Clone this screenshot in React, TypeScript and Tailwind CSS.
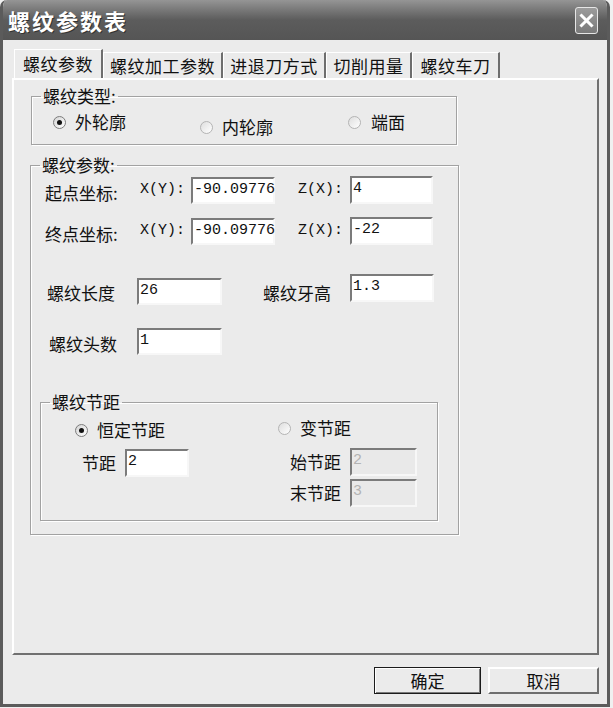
import React from "react";

// 螺纹参数表 dialog (grayscale XP style)

function Radio({ checked }: { checked?: boolean }) {
  return (
    <span
      className={`flex h-[13px] w-[13px] shrink-0 items-center justify-center rounded-full border ${
        checked ? "border-[#7c7c7c] bg-linear-to-br from-[#d4d4d4] to-white" : "border-[#b4b4b4] bg-linear-to-br from-[#dedede] to-white"
      }`}
    >
      {checked && <span className="h-[5px] w-[5px] rounded-full bg-[#111]" />}
    </span>
  );
}

function Field({ value, size, disabled }: { value: string; size: string; disabled?: boolean }) {
  return (
    <div
      className={`${size} shrink-0 border-2 border-t-[#7b7b7b] border-l-[#7b7b7b] border-b-[#f7f7f7] border-r-[#f7f7f7] pl-[1px] pt-[2px] font-['Liberation_Mono',monospace] text-[15px] leading-[17px] ${
        disabled ? "bg-[#e9e9e9] text-[#b3b3b3]" : "bg-white text-[#111]"
      }`}
    >
      {value}
    </div>
  );
}

function Legend({ children }: { children: React.ReactNode }) {
  return <legend className="ml-[9px] px-[2px] text-[17px] leading-[20px]">{children}</legend>;
}

const fieldset = "border border-[#a2a2a2] shadow-[inset_1px_1px_0_#ffffff,1px_1px_0_#ffffff]";

const tabs = [
  { label: "螺纹加工参数", w: "w-[120px]" },
  { label: "进退刀方式", w: "w-[103px]" },
  { label: "切削用量", w: "w-[86px]" },
  { label: "螺纹车刀", w: "w-[88px]" },
];

export default function App() {
  return (
    <div className="h-[708px] w-[613px] bg-[#f0f0f0] font-['Noto_Sans_CJK_SC','Noto_Sans',sans-serif] text-[#111]">
      <div className="flex h-[707px] w-[610px] flex-col overflow-hidden rounded-t-[7px] border-x-[3px] border-b-[3px] border-[#5b5b5b] bg-[#ebebeb]">
        {/* title bar */}
        <div className="flex h-[40px] shrink-0 items-center justify-between bg-linear-to-b from-[#959595] via-[#5c5c5c] to-[#555555] pl-[5px] pr-[9px]">
          <span className="text-[22px] font-bold leading-[26px] tracking-[2px] text-white [text-shadow:1px_1px_0_#333]">
            螺纹参数表
          </span>
          <span className="flex h-[27px] w-[23px] items-center justify-center rounded-[3px] border border-[#e6e6e6] bg-linear-to-b from-[#9c9c9c] to-[#7a7a7a]">
            <svg width="15" height="15" viewBox="0 0 15 15">
              <path d="M2.5 2.5 L12.5 12.5 M12.5 2.5 L2.5 12.5" stroke="#ffffff" strokeWidth="3" strokeLinecap="square" />
            </svg>
          </span>
        </div>

        <div className="flex flex-1 flex-col pl-[9px] pr-[8px] pt-[8px]">
          {/* tabs */}
          <div className="flex h-[30px] items-end pl-[2px] text-[17px] tracking-[0.5px]">
            <div className="flex h-[29px] w-[89px] items-center border-l border-t border-white border-r-2 border-r-[#6e6e6e] pl-[8px] leading-[20px]">
              螺纹参数
            </div>
            {tabs.map((t) => (
              <div
                key={t.label}
                className={`${t.w} flex h-[26px] items-center justify-center border-l border-t border-white border-r-2 border-r-[#6e6e6e] leading-[20px]`}
              >
                {t.label}
              </div>
            ))}
          </div>

          {/* tab panel */}
          <div className="h-[577px] border-2 border-t-white border-l-white border-b-[#707070] border-r-[#707070] text-[17px]">
            <fieldset className={`${fieldset} ml-[17px] mt-[6px] w-[426px] pb-[7px] pt-[6px]`}>
              <Legend>螺纹类型:</Legend>
              <div className="flex items-start pl-[21px] leading-[20px]">
                <div className="flex h-[20px] w-[147px] items-center gap-[9px]">
                  <Radio checked />
                  外轮廓
                </div>
                <div className="mt-[5px] flex h-[20px] w-[148px] items-center gap-[9px]">
                  <Radio />
                  内轮廓
                </div>
                <div className="flex h-[20px] items-center gap-[10px]">
                  <Radio />
                  端面
                </div>
              </div>
            </fieldset>

            <fieldset className={`${fieldset} ml-[16px] mt-[10px] w-[429px] pb-[13px]`}>
              <Legend>螺纹参数:</Legend>

              <div className="mt-[1px] flex h-[28px] items-center pl-[14px]">
                <span className="mt-[5px] w-[95px] leading-[20px]">起点坐标:</span>
                <span className="w-[51px] font-['Liberation_Mono',monospace] text-[15px]">X(Y):</span>
                <Field value="-90.09776" size="w-[84px] h-[27px]" />
                <span className="ml-[23px] w-[52px] font-['Liberation_Mono',monospace] text-[15px]">Z(X):</span>
                <Field value="4" size="w-[83px] h-[28px]" />
              </div>

              <div className="mt-[13px] flex h-[28px] items-center pl-[14px]">
                <span className="mt-[5px] w-[95px] leading-[20px]">终点坐标:</span>
                <span className="w-[51px] font-['Liberation_Mono',monospace] text-[15px]">X(Y):</span>
                <Field value="-90.09776" size="w-[84px] h-[27px]" />
                <span className="ml-[23px] w-[52px] font-['Liberation_Mono',monospace] text-[15px]">Z(X):</span>
                <Field value="-22" size="w-[83px] h-[28px]" />
              </div>

              <div className="mt-[29px] flex items-start pl-[16px]">
                <div className="mt-[4px] flex h-[27px] items-center">
                  <span className="mt-[3px] w-[90px] leading-[20px]">螺纹长度</span>
                  <Field value="26" size="w-[85px] h-[27px]" />
                </div>
                <div className="ml-[41px] flex h-[28px] items-center">
                  <span className="mt-[9px] w-[87px] leading-[20px]">螺纹牙高</span>
                  <Field value="1.3" size="w-[84px] h-[28px]" />
                </div>
              </div>

              <div className="mt-[23px] flex h-[27px] items-center pl-[18px]">
                <span className="mt-[5px] w-[88px] leading-[20px]">螺纹头数</span>
                <Field value="1" size="w-[85px] h-[27px]" />
              </div>

              <fieldset className={`${fieldset} ml-[9px] mt-[37px] w-[398px] pb-[13px]`}>
                <Legend>螺纹节距</Legend>
                <div className="flex leading-[20px]">
                  <div className="w-[237px] pl-[34px] pt-[8px]">
                    <div className="flex h-[20px] items-center gap-[9px]">
                      <Radio checked />
                      恒定节距
                    </div>
                    <div className="ml-[7px] mt-[9px] flex h-[28px] items-center">
                      <span className="w-[43px]">节距</span>
                      <Field value="2" size="w-[64px] h-[28px]" />
                    </div>
                  </div>
                  <div className="pt-[6px]">
                    <div className="flex h-[20px] items-center gap-[9px]">
                      <Radio />
                      变节距
                    </div>
                    <div className="ml-[12px] mt-[10px] flex h-[28px] items-center">
                      <span className="w-[60px]">始节距</span>
                      <Field value="2" size="w-[67px] h-[28px]" disabled />
                    </div>
                    <div className="ml-[12px] mt-[3px] flex h-[28px] items-center">
                      <span className="w-[60px]">末节距</span>
                      <Field value="3" size="w-[67px] h-[28px]" disabled />
                    </div>
                  </div>
                </div>
              </fieldset>
            </fieldset>
          </div>

          {/* buttons */}
          <div className="mt-[12px] flex justify-end gap-[7px] text-[17px] leading-[20px]">
            <button className="flex h-[27px] w-[107px] items-center justify-center border border-[#1c1c1c] bg-[#ebebeb] shadow-[inset_1px_1px_0_#ffffff,inset_-1px_-1px_0_#7a7a7a]">
              确定
            </button>
            <button className="flex h-[27px] w-[111px] items-center justify-center border-2 border-t-white border-l-white border-b-[#6e6e6e] border-r-[#6e6e6e] bg-[#ebebeb]">
              取消
            </button>
          </div>
        </div>
      </div>
    </div>
  );
}
